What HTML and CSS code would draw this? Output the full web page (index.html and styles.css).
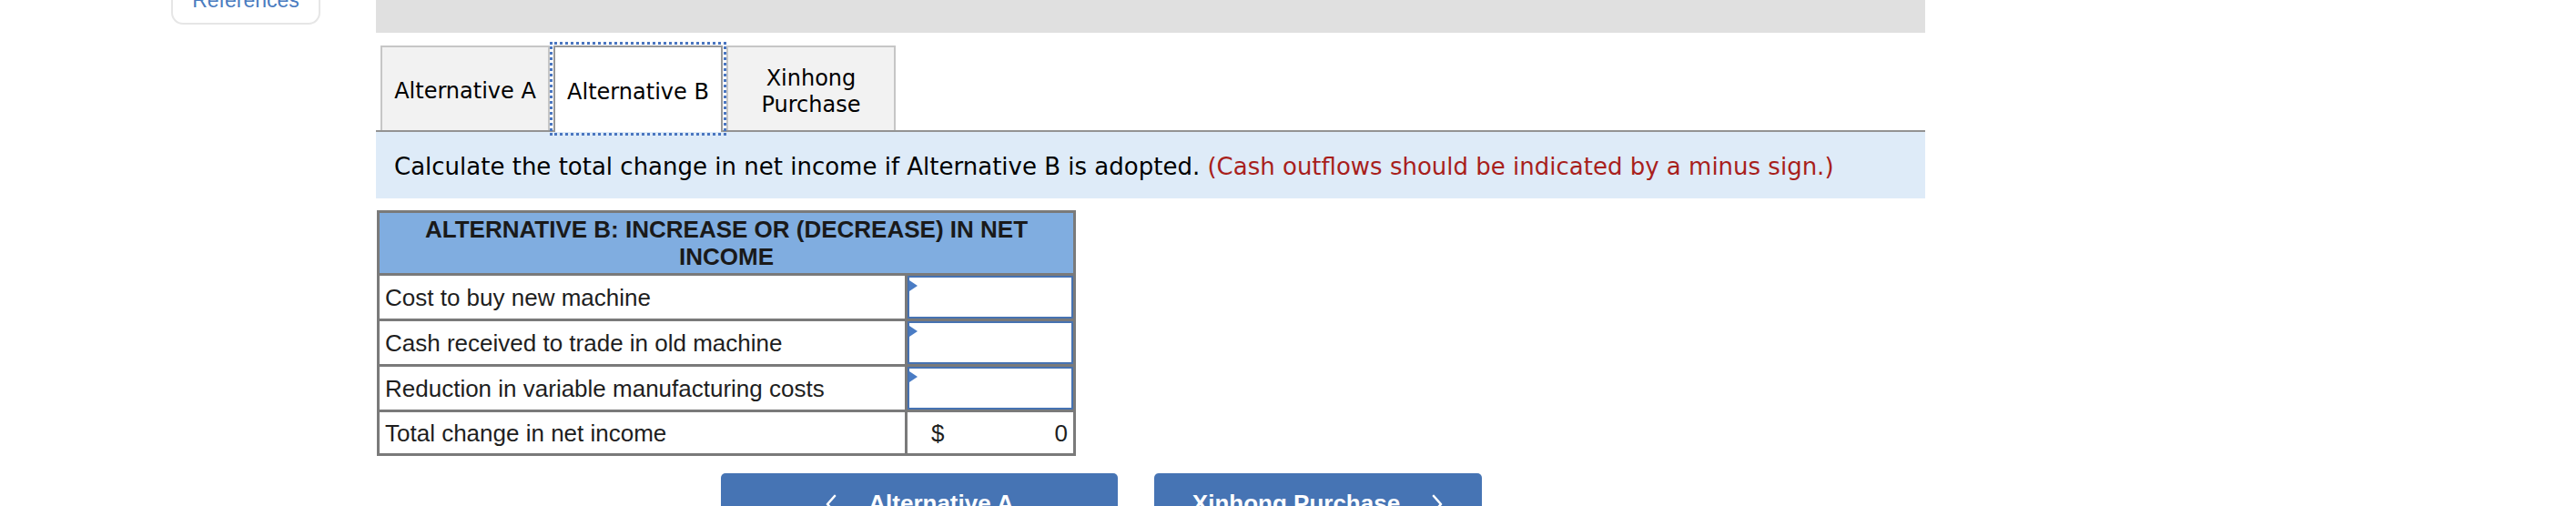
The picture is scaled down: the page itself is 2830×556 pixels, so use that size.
FILE: index.html
```html
<!DOCTYPE html>
<html lang="en">
<head>
<meta charset="utf-8">
<title>Alternative B</title>
<link rel="stylesheet" href="styles.css">
</head>
<body>
<div class="page">
  <aside class="side">
    <div class="refs">References</div>
  </aside>
  <main class="main">
    <div class="topbar"></div>
    <div class="tabs">
      <div class="tab">Alternative A</div>
      <div class="tab active">Alternative B</div>
      <div class="tab">Xinhong Purchase</div>
    </div>
    <div class="instr">Calculate the total change in net income if Alternative B is adopted. <span class="red">(Cash outflows should be indicated by a minus sign.)</span></div>
    <table class="grid">
      <thead>
        <tr><th colspan="2">ALTERNATIVE B: INCREASE OR (DECREASE) IN NET INCOME</th></tr>
      </thead>
      <tbody>
        <tr><td class="lbl">Cost to buy new machine</td><td class="val"><div class="inp"></div></td></tr>
        <tr><td class="lbl">Cash received to trade in old machine</td><td class="val"><div class="inp"></div></td></tr>
        <tr><td class="lbl">Reduction in variable manufacturing costs</td><td class="val"><div class="inp"></div></td></tr>
        <tr class="total"><td class="lbl">Total change in net income</td><td class="val"><div class="sum"><span>$</span><span>0</span></div></td></tr>
      </tbody>
    </table>
    <div class="nav">
      <div class="btn prev">
        <svg class="chev" width="14" height="22" viewBox="0 0 14 22"><path d="M11 2 L3 11 L11 20" fill="none" stroke="#fff" stroke-width="2.6" stroke-linecap="round" stroke-linejoin="round"/></svg>
        <span>Alternative A</span>
      </div>
      <div class="btn next">
        <span>Xinhong Purchase</span>
        <svg class="chev" width="14" height="22" viewBox="0 0 14 22"><path d="M3 2 L11 11 L3 20" fill="none" stroke="#fff" stroke-width="2.6" stroke-linecap="round" stroke-linejoin="round"/></svg>
      </div>
    </div>
  </main>
</div>
</body>
</html>
```

FILE: styles.css
```css
html, body {
  margin: 0;
  padding: 0;
  background: #ffffff;
}
body {
  width: 2830px;
  height: 556px;
  overflow: hidden;
}
.page {
  display: flex;
  align-items: flex-start;
}
.side {
  width: 413px;
  flex: none;
}
.refs {
  margin-top: -33px;
  margin-left: 188px;
  width: 164px;
  height: 60px;
  box-sizing: border-box;
  border: 2px solid #e6e6e6;
  border-radius: 13px;
  padding-top: 16px;
  text-align: center;
  font-family: "Liberation Sans", Arial, sans-serif;
  font-size: 23px;
  line-height: 30px;
  color: #4a7cc0;
}
.main {
  width: 1702px;
  flex: none;
}
.topbar {
  height: 36px;
  background: #e0e0e0;
}
.tabs {
  display: flex;
  align-items: flex-start;
  gap: 4px;
  margin-top: 14px;
  padding-left: 5px;
  height: 93px;
  border-bottom: 2px solid #939393;
}
.tab {
  width: 186px;
  height: 93px;
  flex: none;
  box-sizing: border-box;
  border: 2px solid #c6c6c6;
  border-bottom: none;
  background: #f2f2f2;
  display: flex;
  align-items: center;
  justify-content: center;
  text-align: center;
  padding: 6px 8px 0;
  font-family: "DejaVu Sans", Verdana, sans-serif;
  font-size: 24px;
  line-height: 29px;
  color: #000000;
}
.tab.active {
  background: #ffffff;
  border-color: #999999;
  height: 95px;
  outline: 3px dotted #4a76c0;
  outline-offset: 1px;
}
.instr {
  background: #deebf8;
  padding: 21px 0 18px 20px;
  font-family: "DejaVu Sans", Verdana, sans-serif;
  font-size: 26px;
  line-height: 34px;
  color: #000000;
}
.red {
  color: #a81f1c;
}
.grid {
  margin-top: 13px;
  margin-left: 1px;
  width: 768px;
  border-collapse: collapse;
  font-family: "Liberation Sans", Arial, sans-serif;
  font-size: 26px;
  line-height: 30px;
  color: #1e1e1e;
}
.grid th, .grid td {
  border: 3px solid #7a7a7a;
}
.grid th {
  background: #80ade0;
  font-weight: bold;
  text-align: center;
  padding: 3px 8px;
  height: 60px;
  color: #1a1a1a;
}
.grid td.lbl {
  height: 47px;
  padding: 0 6px;
  text-align: left;
}
.grid td.val {
  width: 182px;
  padding: 0;
}
.grid tr.total td {
  height: 45px;
}
.inp {
  position: relative;
  height: 47px;
  box-sizing: border-box;
  border: 2px solid #4672b2;
  background: #ffffff;
}
.inp::before {
  content: "";
  position: absolute;
  left: 0;
  top: 3px;
  border-left: 9px solid #4a7cc4;
  border-top: 6px solid transparent;
  border-bottom: 6px solid transparent;
}
.sum {
  display: flex;
  justify-content: space-between;
  padding: 0 6px 0 26px;
}
.nav {
  display: flex;
  gap: 40px;
  margin-top: 19px;
  margin-left: 379px;
}
.btn {
  height: 66px;
  box-sizing: border-box;
  padding-top: 18px;
  background: #4674b4;
  border-radius: 5px;
  color: #ffffff;
  display: flex;
  align-items: flex-start;
  justify-content: center;
  gap: 34px;
  font-family: "Liberation Sans", Arial, sans-serif;
  font-weight: bold;
  font-size: 26px;
  line-height: 30px;
}
.btn.prev {
  width: 436px;
}
.btn.next {
  width: 360px;
}
.chev {
  margin-top: 5px;
}
```
